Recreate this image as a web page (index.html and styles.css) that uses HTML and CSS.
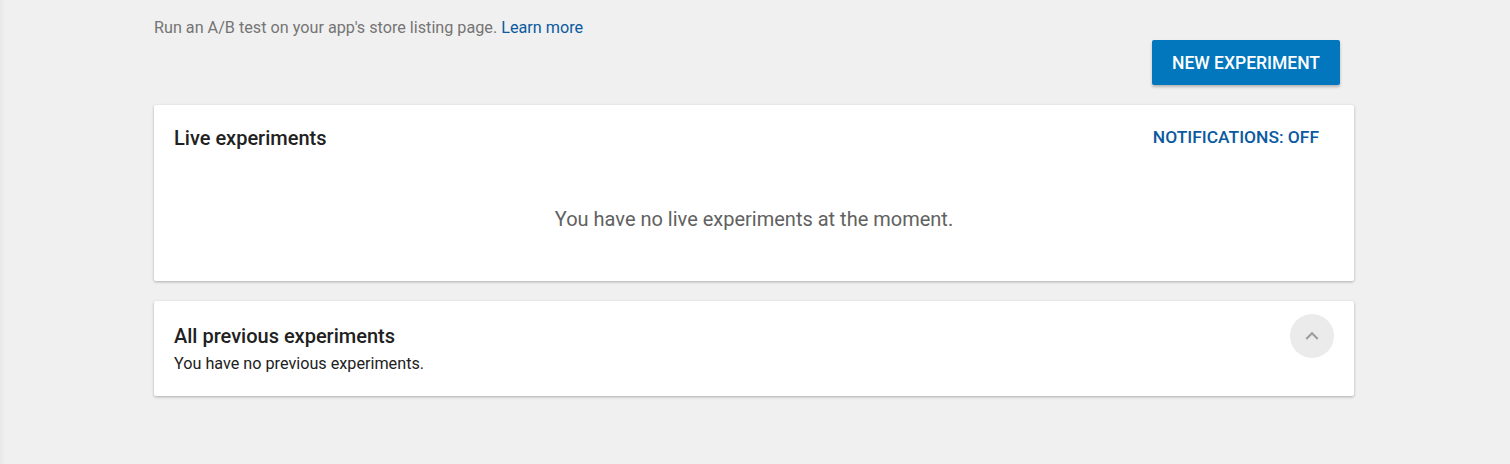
FILE: index.html
```html
<!DOCTYPE html>
<html>
<head>
<meta charset="utf-8">
<link rel="stylesheet" href="styles.css">
</head>
<body>
<div class="edge"></div>
<main class="page">
  <p class="intro">Run an A/B test on your app's store listing page. <a class="link" href="#">Learn more</a></p>
  <div class="actions">
    <button class="btn-primary">NEW EXPERIMENT</button>
  </div>
  <section class="card card-live">
    <header class="card-head">
      <h2 class="card-title">Live experiments</h2>
      <button class="btn-text">NOTIFICATIONS: OFF</button>
    </header>
    <p class="empty">You have no live experiments at the moment.</p>
  </section>
  <section class="card card-prev">
    <div class="prev-text">
      <h2 class="card-title">All previous experiments</h2>
      <p class="sub">You have no previous experiments.</p>
    </div>
    <button class="btn-round" aria-label="Collapse">
      <svg width="26" height="26" viewBox="0 0 24 24"><path d="M7.41 15.41L12 10.83l4.59 4.58L18 14l-6-6-6 6z" fill="#9e9e9e"/></svg>
    </button>
  </section>
</main>
</body>
</html>
```
FILE: styles.css
```css
* { box-sizing: border-box; }
html, body { margin: 0; height: 100%; }
body {
  background: #f0f0f0;
  font-family: Roboto, "Noto Sans", Arial, sans-serif;
  position: relative;
}
.edge {
  position: absolute;
  left: 0; top: 0; bottom: 0;
  width: 6px;
  background: linear-gradient(to right, rgba(0,0,0,0.03), rgba(0,0,0,0));
}
.page {
  width: 1200px;
  margin-left: 154px;
  padding-top: 18px;
}
.intro {
  margin: 0;
  font-size: 16.2px;
  line-height: 20px;
  color: #757575;
}
.link { color: #0b5aa0; text-decoration: none; }
.actions {
  display: flex;
  justify-content: flex-end;
  padding-right: 14px;
  margin-top: 2px;
}
.btn-primary {
  height: 45px;
  width: 188px;
  border: none;
  border-radius: 2px;
  background: #0277bd;
  color: #fff;
  font-family: inherit;
  font-size: 17.5px;
  font-weight: 500;
  box-shadow: 0 2px 3px rgba(0,0,0,0.25);
  padding: 0;
}
.card {
  background: #fff;
  border-radius: 2px;
  box-shadow: 0 1px 3px rgba(0,0,0,0.28);
}
.card-live {
  margin-top: 20px;
  height: 176px;
  padding: 20px 35px 0 20px;
}
.card-head {
  display: flex;
  justify-content: space-between;
  align-items: center;
  height: 26px;
}
.card-title {
  margin: 0;
  font-size: 20px;
  font-weight: 500;
  color: #212121;
  line-height: 26px;
}
.btn-text {
  border: none;
  background: none;
  padding: 0;
  color: #0b5aa0;
  font-family: inherit;
  font-size: 17.4px;
  font-weight: 500;
  margin-top: -2px;
}
.empty {
  margin: 55px 0 0 15px;
  text-align: center;
  font-size: 20px;
  line-height: 26px;
  color: #616161;
}
.card-prev {
  margin-top: 20px;
  height: 95px;
  display: flex;
  justify-content: space-between;
  align-items: flex-start;
  padding: 22px 20px 0 20px;
}
.sub {
  margin: 5px 0 0;
  font-size: 16.2px;
  line-height: 20px;
  color: #212121;
}
.btn-round {
  width: 44px;
  height: 44px;
  border-radius: 50%;
  border: none;
  background: #ebebeb;
  display: flex;
  align-items: center;
  justify-content: center;
  padding: 0;
  margin-top: -9px;
}
```
